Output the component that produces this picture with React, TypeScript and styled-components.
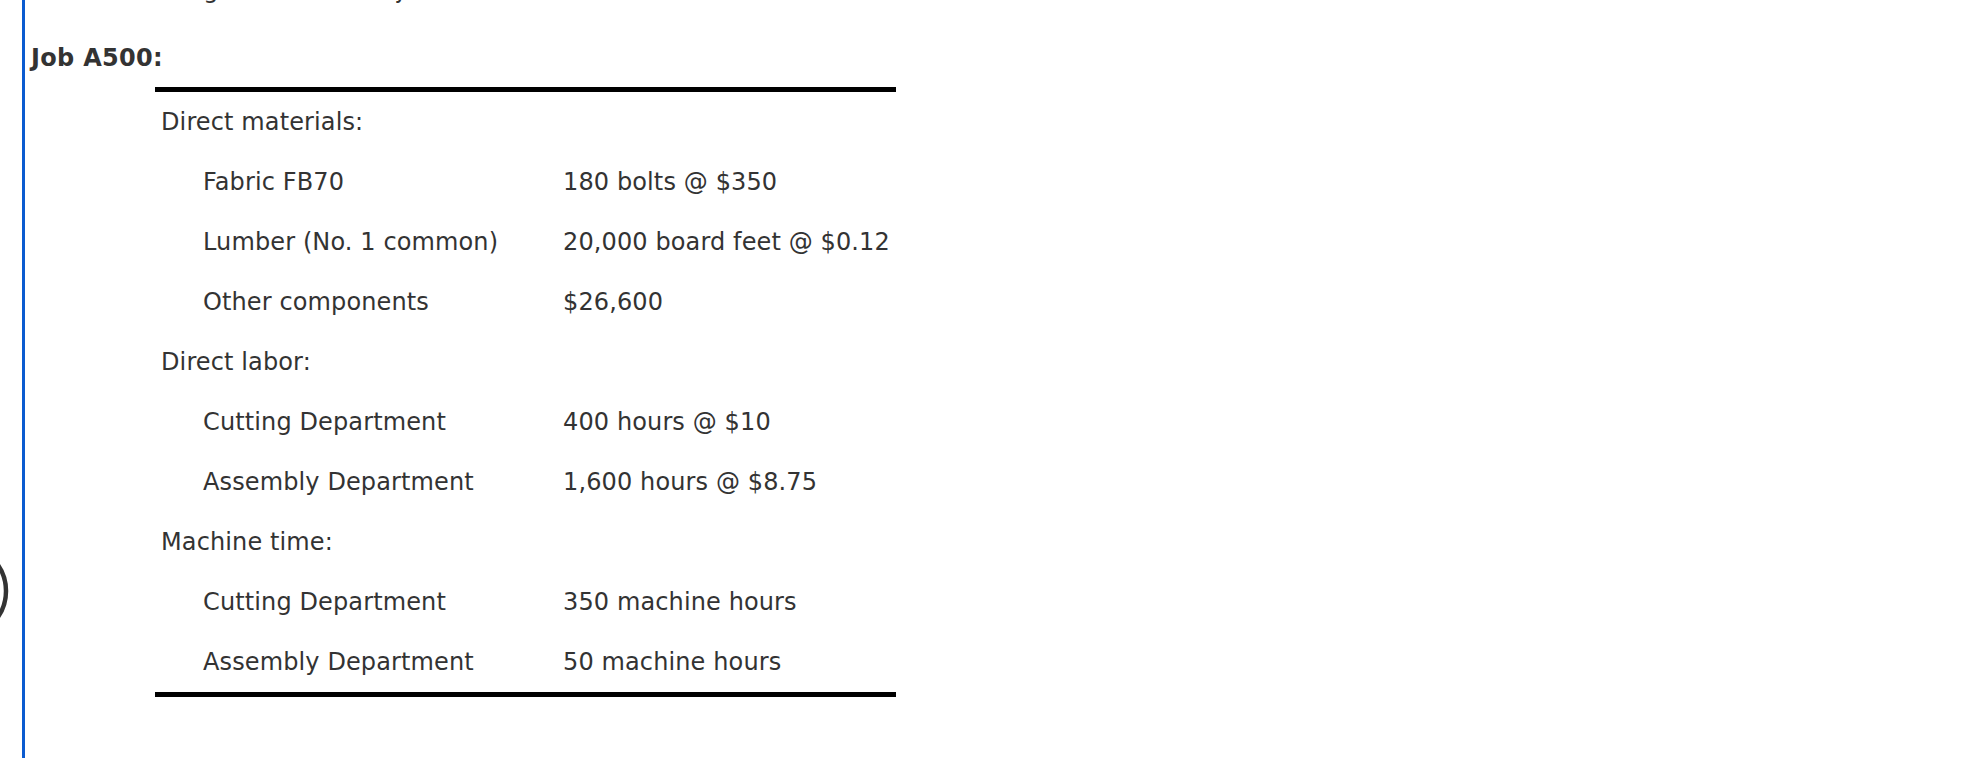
import styled, { createGlobalStyle } from 'styled-components';

const GlobalStyle = createGlobalStyle`
  html, body {
    margin: 0;
    padding: 0;
    background: #ffffff;
  }

  body {
    font-family: 'DejaVu Sans', Verdana, sans-serif;
    color: #333333;
  }
`;

const Page = styled.div`
  display: flex;
  min-height: 758px;
  overflow: hidden;
`;

const Gutter = styled.div`
  width: 22px;
  flex-shrink: 0;
  overflow: hidden;
  padding-top: 541px;
`;

const Content = styled.div`
  flex: 1;
  border-left: 3px solid #0b5bd0;
  padding-left: 6px;
  font-size: 24px;
  line-height: 28px;
  letter-spacing: 0.12px;
`;

const LeadText = styled.p`
  margin: -24px 0 0;
  padding-left: 26px;
  white-space: nowrap;
`;

const JobTitle = styled.h3`
  margin: 40px 0 0;
  font-size: 24px;
  line-height: 28px;
  font-weight: bold;
  letter-spacing: 0.3px;
`;

const CostTable = styled.div`
  display: grid;
  grid-template-columns: 408px max-content;
  width: max-content;
  margin: 15px 0 0 124px;
  border-top: 5px solid #000000;
  border-bottom: 5px solid #000000;
`;

const Cell = styled.div<{ $indent?: boolean; $span?: boolean }>`
  display: flex;
  align-items: center;
  height: 60px;
  padding-left: ${(p) => (p.$indent ? '48px' : '6px')};
  grid-column: ${(p) => (p.$span ? '1 / span 2' : 'auto')};
  white-space: nowrap;
`;

const ValueCell = styled.div`
  display: flex;
  align-items: center;
  height: 60px;
  padding-right: 6px;
  white-space: nowrap;
`;

type Section = {
  title: string;
  items: [string, string][];
};

const sections: Section[] = [
  {
    title: 'Direct materials:',
    items: [
      ['Fabric FB70', '180 bolts @ $350'],
      ['Lumber (No. 1 common)', '20,000 board feet @ $0.12'],
      ['Other components', '$26,600'],
    ],
  },
  {
    title: 'Direct labor:',
    items: [
      ['Cutting Department', '400 hours @ $10'],
      ['Assembly Department', '1,600 hours @ $8.75'],
    ],
  },
  {
    title: 'Machine time:',
    items: [
      ['Cutting Department', '350 machine hours'],
      ['Assembly Department', '50 machine hours'],
    ],
  },
];

export default function App() {
  return (
    <>
      <GlobalStyle />
      <Page>
        <Gutter>
          <svg width="22" height="100" viewBox="0 0 22 100">
            <circle cx="-40" cy="50" r="46" fill="none" stroke="#333333" strokeWidth="4.5" />
          </svg>
        </Gutter>
        <Content>
          <LeadText>The following relates to the job:</LeadText>
          <JobTitle>Job A500:</JobTitle>
          <CostTable>
            {sections.map((s) => (
              <>
                <Cell key={s.title} $span>
                  {s.title}
                </Cell>
                {s.items.map(([label, value]) => (
                  <>
                    <Cell key={`${s.title}-${label}`} $indent>
                      {label}
                    </Cell>
                    <ValueCell key={`${s.title}-${label}-v`}>{value}</ValueCell>
                  </>
                ))}
              </>
            ))}
          </CostTable>
        </Content>
      </Page>
    </>
  );
}
